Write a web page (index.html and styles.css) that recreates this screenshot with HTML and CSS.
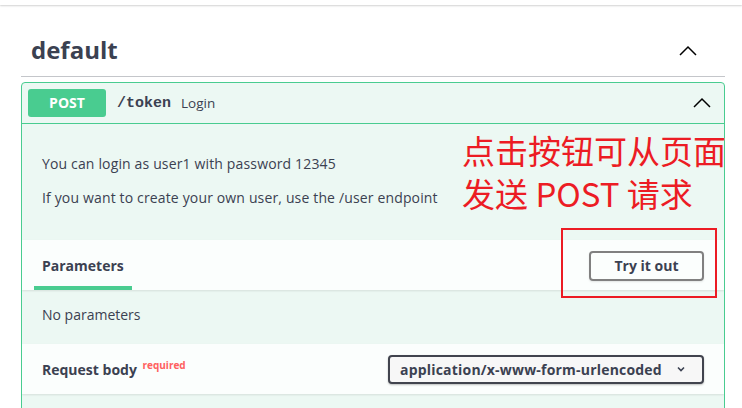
FILE: index.html
```html
<!DOCTYPE html>
<html lang="zh">
<head>
<meta charset="utf-8">
<link rel="stylesheet" href="styles.css">
</head>
<body>
<div class="topbar"></div>
<div class="wrap">
  <h3 class="tag-title">
    <span>default</span>
    <svg class="tag-arrow" width="20" height="20" viewBox="0 0 20 20"><polyline points="2,14 10,6 18,14" fill="none" stroke="#000" stroke-width="1.5"/></svg>
  </h3>
  <div class="opblock">
    <div class="op-summary">
      <span class="method">POST</span>
      <span class="path">/token</span>
      <span class="summary-desc">Login</span>
      <svg class="op-arrow" width="20" height="20" viewBox="0 0 20 20"><polyline points="2,14 10,6 18,14" fill="none" stroke="#000" stroke-width="1.5"/></svg>
    </div>
    <div class="op-desc">
      <p>You can login as user1 with password 12345</p>
      <p>If you want to create your own user, use the /user endpoint</p>
    </div>
    <div class="section-header">
      <div class="tab"><h4>Parameters</h4></div>
      <button class="try">Try it out</button>
    </div>
    <div class="section-body">No parameters</div>
    <div class="section-header">
      <h4 class="rb-title">Request body <span class="required">required</span></h4>
      <div class="select">application/x-www-form-urlencoded
        <svg class="sel-arrow" width="10" height="10" viewBox="0 0 10 10"><polyline points="2,3.5 5,6.5 8,3.5" fill="none" stroke="#3b4151" stroke-width="1.6"/></svg>
      </div>
    </div>
    <div class="section-tail"></div>
  </div>
  <div class="note">点击按钮可从页面<br>发送 POST 请求</div>
  <div class="note-box"></div>
</div>
</body>
</html>
```
FILE: styles.css
```css
html, body {
  margin: 0;
  padding: 0;
  background: #fff;
  height: 100%;
  overflow: hidden;
}
body {
  font-family: "Open Sans", "Noto Sans CJK SC", sans-serif;
  color: #3b4151;
}
.topbar {
  height: 5px;
  background: #fff;
  box-shadow: 0 1px 2px rgba(0, 0, 0, 0.18);
  position: relative;
  z-index: 1;
}
.wrap {
  position: relative;
  margin: 0 17px 0 21px;
  padding-top: 23px;
}
.tag-title {
  box-sizing: border-box;
  height: 49px;
  margin: 0;
  padding: 0 27px 6px 10px;
  display: flex;
  align-items: center;
  justify-content: space-between;
  font-size: 24px;
  font-weight: 700;
  color: #3b4151;
  border-bottom: 1px solid rgba(59, 65, 81, 0.3);
}
.tag-arrow {
  margin-top: 4px;
}
.opblock {
  margin-top: 5px;
  border: 1px solid #49cc90;
  border-radius: 4px;
  background: #ecf8f3;
  overflow: hidden;
}
.op-summary {
  display: flex;
  align-items: center;
  padding: 6px 12px 6px 6px;
  border-bottom: 1px solid #49cc90;
}
.method {
  width: 78px;
  height: 28px;
  line-height: 28px;
  text-align: center;
  background: #49cc90;
  color: #fff;
  border-radius: 3px;
  font-size: 14px;
  font-weight: 700;
}
.path {
  margin-left: 11px;
  font-family: "Liberation Mono", monospace;
  font-size: 15px;
  font-weight: 700;
  color: #3b4151;
}
.summary-desc {
  margin-left: 10px;
  font-size: 13.5px;
  flex: 1;
}
.op-desc {
  padding: 16px 20px 18px;
  font-size: 14px;
  letter-spacing: 0.15px;
}
.op-desc p {
  margin: 14px 0;
  line-height: 20px;
}
.section-header {
  box-sizing: border-box;
  height: 50px;
  padding: 0 20px;
  display: flex;
  align-items: center;
  justify-content: space-between;
  background: rgba(255, 255, 255, 0.8);
  box-shadow: 0 1px 2px rgba(0, 0, 0, 0.1);
  position: relative;
}
.tab {
  align-self: stretch;
  display: flex;
  align-items: center;
  position: relative;
}
.tab h4, .rb-title {
  margin: 0;
  font-size: 14px;
  font-weight: 700;
  color: #3b4151;
}
.tab::after {
  content: "";
  position: absolute;
  left: -10%;
  right: -10%;
  bottom: 0;
  height: 4px;
  background: #49cc90;
}
.try {
  width: 115px;
  height: 30px;
  margin-top: 1px;
  border: 2px solid #808080;
  border-radius: 4px;
  background: transparent;
  font-family: inherit;
  font-size: 14px;
  font-weight: 700;
  color: #3b4151;
  box-shadow: 0 1px 2px rgba(0, 0, 0, 0.1);
  padding: 0;
}
.section-body {
  padding: 15px 20px 19px;
  line-height: 20px;
  font-size: 14px;
}
.required {
  position: relative;
  top: -6px;
  margin-left: 2px;
  font-size: 10px;
  color: #ff6060;
}
.select {
  box-sizing: border-box;
  width: 316px;
  height: 29px;
  padding: 0 10px;
  display: flex;
  align-items: center;
  justify-content: space-between;
  border: 2px solid #41444e;
  border-radius: 4px;
  background: #f7f7f7;
  box-shadow: 0 1px 2px rgba(0, 0, 0, 0.25);
  font-size: 14px;
  letter-spacing: 0.2px;
  font-weight: 700;
  color: #3b4151;
}
.sel-arrow {
  margin-right: 6px;
}
.section-tail {
  height: 30px;
}
.note {
  position: absolute;
  left: 441px;
  top: 124px;
  font-family: "Noto Sans CJK SC", sans-serif;
  font-size: 33px;
  line-height: 43px;
  color: #ec1c24;
  white-space: nowrap;
}
.note-box {
  position: absolute;
  left: 540px;
  top: 223px;
  width: 152px;
  height: 66px;
  border: 2px solid #ec1c24;
}
```
